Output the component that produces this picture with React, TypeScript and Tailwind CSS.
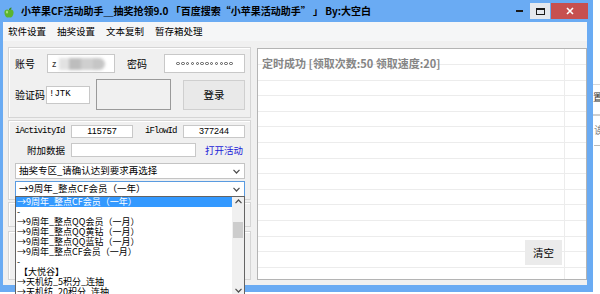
import React from 'react'

const logRows = Array.from({ length: 15 })

const listItems = [
  '→9周年_整点CF会员（一年）',
  '-',
  '→9周年_整点QQ会员（一月）',
  '→9周年_整点QQ黄钻（一月）',
  '→9周年_整点QQ蓝钻（一月）',
  '→9周年_整点CF会员（一月）',
  '-',
  ' 【大悦谷】',
  '→天机纺_5积分_连抽',
  '→天机纺_20积分_连抽',
]

function Chevron({ up }: { up?: boolean }) {
  return (
    <svg width="7" height="5" viewBox="0 0 7 5">
      <path
        d={up ? 'M0.5 4.2 L3.5 1 L6.5 4.2' : 'M0.5 0.8 L3.5 4 L6.5 0.8'}
        fill="none"
        stroke="#4d4d4d"
        strokeWidth="1.2"
      />
    </svg>
  )
}

function Apple() {
  return (
    <svg width="10" height="11" viewBox="0 0 10 11" className="ml-[4px] mt-[2px]">
      <path
        d="M5 3.2 C3 2 0.4 2.6 0.4 5.6 C0.4 8.6 2.4 10.6 3.5 10.6 C4.2 10.6 4.5 10.2 5 10.2 C5.5 10.2 5.8 10.6 6.5 10.6 C7.6 10.6 9.6 8.6 9.6 5.6 C9.6 2.6 7 2 5 3.2Z"
        fill="#5cb42e"
      />
      <path d="M5 3 C5 1.5 6 0.4 7.6 0.4 C7.6 2 6.5 3 5 3Z" fill="#3a8a1a" />
      <ellipse cx="3" cy="5" rx="1.1" ry="1.6" fill="#a6e07a" />
    </svg>
  )
}

function Select({ text, focused }: { text: string; focused?: boolean }) {
  return (
    <div
      className={`flex h-[16px] w-[230px] items-center border bg-white pl-[3px] pr-[4px] ${
        focused ? 'border-[#5a9be0]' : 'border-[#c4c4c4]'
      }`}
    >
      <span className="flex-1 whitespace-nowrap text-[9.5px] leading-none">{text}</span>
      <Chevron />
    </div>
  )
}

export default function App() {
  return (
    <div className="relative h-[294px] w-[600px] overflow-hidden bg-white font-['Noto_Sans_CJK_SC',sans-serif] text-black">
      <div className="flex h-[292px] w-[593px] flex-col bg-[#6aabf3]">
        {/* title bar */}
        <div className="flex h-[22px] shrink-0 items-start">
          <div className="mt-[5px]">
            <Apple />
          </div>
          <span className="ml-[7px] mt-[4px] whitespace-nowrap text-[10px] font-bold leading-[14px]">
            小苹果CF活动助手＿抽奖抢领9.0 「百度搜索“小苹果活动助手” 」 By:大空白
          </span>
          <div className="ml-auto mr-[5px] mt-[3px] flex h-[16px] gap-[1px]">
            <div className="flex w-[20px] items-center justify-center">
              <span className="h-[2px] w-[7px] bg-[#1a1a1a]" />
            </div>
            <div className="flex w-[20px] items-center justify-center bg-[#e4e8ee]">
              <span className="h-[7px] w-[9px] border border-t-2 border-[#1a1a1a]" />
            </div>
            <div className="flex w-[37px] items-center justify-center bg-[#c75050]">
              <svg width="8" height="8" viewBox="0 0 8 8">
                <path d="M1 1 L7 7 M7 1 L1 7" stroke="#fff" strokeWidth="1.6" />
              </svg>
            </div>
          </div>
        </div>

        {/* client area */}
        <div className="mb-[7px] ml-[3px] mr-[6px] flex flex-1 flex-col bg-[#f0f0f0]">
          <div className="flex h-[19px] shrink-0 items-center gap-[11px] bg-[#f5f6f7] pl-[5px] text-[9.5px]">
            <span>软件设置</span>
            <span>抽奖设置</span>
            <span>文本复制</span>
            <span>暂存箱处理</span>
          </div>

          <div className="flex flex-1 items-start pl-[5px] pt-[6px]">
            {/* left column */}
            <div className="flex w-[243px] flex-col">
              <div className="h-[71px] border border-[#d5d5d5] pl-[6px] pt-[6px] shadow-[inset_1px_1px_0_#fff]">
                <div className="flex h-[19px] items-center text-[10px]">
                  <span className="w-[32px]">账号</span>
                  <div className="relative flex h-[19px] w-[68px] items-center border border-[#c8c8c8] bg-white pl-[4px]">
                    <span className="text-[9px] text-[#333]">z</span>
                    <div className="ml-[3px] flex h-[12px] gap-0 blur-[1.5px]">
                      <span className="w-[10px] bg-[#e2e2e2]" />
                      <span className="w-[12px] bg-[#bdbdbd]" />
                      <span className="w-[12px] bg-[#cfcfcf]" />
                      <span className="w-[12px] rounded-r-full bg-[#c6c6c6]" />
                    </div>
                  </div>
                  <span className="ml-[12px] w-[37px]">密码</span>
                  <div className="flex h-[19px] w-[81px] items-center justify-center gap-[1.3px] border border-[#c8c8c8] bg-white">
                    {Array.from({ length: 12 }).map((_, i) => (
                      <span key={i} className="h-[3.5px] w-[3.5px] rounded-full border border-[#555]" />
                    ))}
                  </div>
                </div>
                <div className="mt-[6px] flex h-[31px] items-center text-[10px]">
                  <span className="w-[31px] whitespace-nowrap">验证码</span>
                  <div className="flex h-[18px] w-[44px] items-center border border-[#c8c8c8] bg-white pl-[2px] font-['Liberation_Mono',monospace] text-[9px]">
                    !JTK
                  </div>
                  <div className="ml-[6px] h-[31px] w-[75px] border border-[#9a9a9a] bg-[#f0f0f0]" />
                  <div className="ml-[12px] flex h-[30px] w-[62px] items-center justify-center border border-[#cfcfcf] bg-[#e9e9e9] text-[10.5px]">
                    登录
                  </div>
                </div>
              </div>

              <div className="relative z-10 mt-[2px] h-[80px] border border-[#d5d5d5] pl-[6px] pt-[4px] shadow-[inset_1px_1px_0_#fff]">
                <div className="flex h-[13px] items-center">
                  <span className="w-[56px] font-['Liberation_Mono',monospace] text-[9px] tracking-[-0.9px]">iActivityId</span>
                  <div className="flex h-[13px] w-[62px] items-center justify-center border border-[#c8c8c8] bg-white font-['Liberation_Sans',sans-serif] text-[9px]">
                    115757
                  </div>
                  <span className="ml-[12px] w-[38px] font-['Liberation_Mono',monospace] text-[9px] tracking-[-0.9px]">iFlowId</span>
                  <div className="flex h-[13px] w-[62px] items-center justify-center border border-[#c8c8c8] bg-white font-['Liberation_Sans',sans-serif] text-[9px]">
                    377244
                  </div>
                </div>
                <div className="mt-[5px] flex h-[14px] items-center">
                  <span className="w-[56px] pr-[6px] text-right text-[9.5px]">附加数据</span>
                  <div className="h-[14px] w-[125px] border border-[#c8c8c8] bg-white" />
                  <span className="ml-[9px] text-[9.5px] text-[#2323d8]">打开活动</span>
                </div>
                <div className="mt-[6px]">
                  <Select text="抽奖专区_请确认达到要求再选择" />
                </div>
                <div className="relative mt-[2px]">
                  <Select text="→9周年_整点CF会员（一年）" focused />
                  <div className="absolute left-0 top-[calc(100%-1px)] flex h-[100px] w-[230px] border border-[#646464] bg-white">
                    <div className="flex flex-1 flex-col">
                      {listItems.map((item, i) => (
                        <div
                          key={i}
                          className={`h-[10px] shrink-0 whitespace-pre pl-[1px] text-[9px] leading-[10px] ${
                            i === 0 ? 'bg-[#3399ff] text-white' : ''
                          }`}
                        >
                          {item}
                        </div>
                      ))}
                    </div>
                    <div className="flex w-[12px] flex-col items-center bg-[#f0f0f0] pt-[2px]">
                      <Chevron up />
                      <div className="mt-[18px] h-[16px] w-[10px] bg-[#cdcdcd]" />
                      <div className="mt-auto pb-[2px]">
                        <Chevron />
                      </div>
                    </div>
                  </div>
                </div>
              </div>

              <div className="mt-[2px] h-[25px] border border-[#d5d5d5] shadow-[inset_1px_1px_0_#fff]" />
              <div className="mt-[4px] h-[49px] border border-[#d5d5d5] shadow-[inset_1px_1px_0_#fff]" />
            </div>

            {/* log panel */}
            <div className="relative ml-[6px] mt-[1px] h-[232px] flex-1 overflow-hidden border border-[#b4b4b4] bg-white">
              {logRows.map((_, i) => (
                <div key={i} className={`flex border-b border-[#ececec] ${i === 0 ? 'h-[16px]' : 'h-[15.6px]'}`}>
                  <div className="w-[307px] border-r border-[#ececec] pl-[4px]">
                    {i === 0 && (
                      <span className="whitespace-nowrap text-[11px] font-semibold leading-[16px] text-[#858585]">
                        定时成功 [领取次数:50 领取速度:20]
                      </span>
                    )}
                  </div>
                  <div className="flex-1" />
                </div>
              ))}
              <div className="absolute left-[267px] top-[191px] flex h-[25px] w-[37px] items-center justify-center bg-[#ebebeb] text-[10.5px]">
                清空
              </div>
            </div>
          </div>
        </div>
      </div>

      {/* other window peeking at the right edge */}
      <div className="absolute left-[593px] top-[84px] h-[1px] w-[7px] bg-[#d8d8d8]" />
      <span className="absolute left-[593px] top-[91px] text-[10px] leading-[12px] text-[#333]">置</span>
      <div className="absolute left-[593px] top-[114px] h-[2px] w-[7px] bg-[#cfcfcf]" />
      <span className="absolute left-[594px] top-[124px] text-[10px] leading-[12px] text-[#888]">诶</span>
      <div className="absolute left-[594px] top-[145px] w-[6px] border-t border-dashed border-[#bbb]" />
    </div>
  )
}
